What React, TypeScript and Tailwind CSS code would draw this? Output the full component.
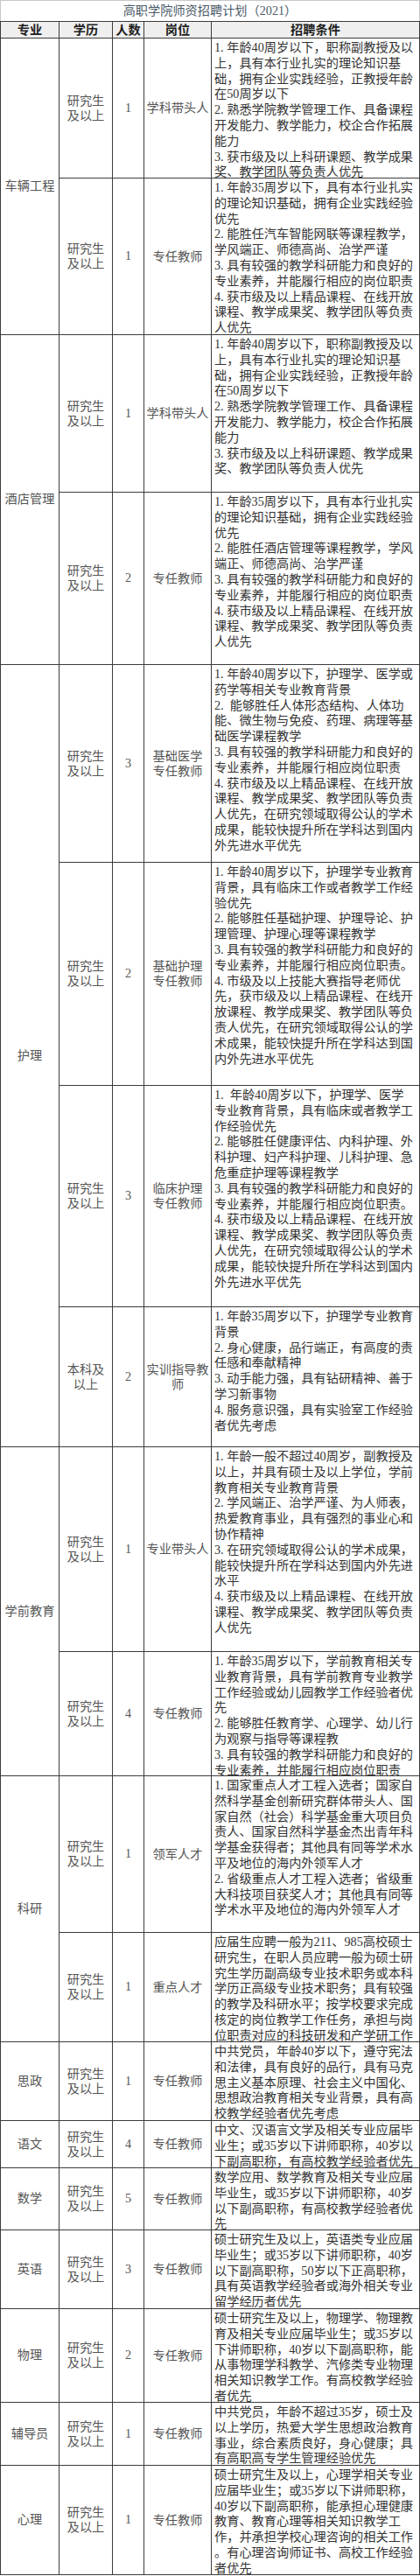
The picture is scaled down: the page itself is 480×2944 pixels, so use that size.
import React from 'react';

type Sub = { h: string; edu: string[]; n: string; pos: string[]; lines: string[] };
type Group = { major: string; rows: Sub[] };

const groups: Group[] = [
  {
    major: '车辆工程',
    rows: [
      {
        h: 'h-[160px]', edu: ['研究生', '及以上'], n: '1', pos: ['学科带头人'],
        lines: [
          '1. 年龄40周岁以下，职称副教授及以',
          '上，具有本行业扎实的理论知识基',
          '础，拥有企业实践经验，正教授年龄',
          '在50周岁以下',
          '2. 熟悉学院教学管理工作、具备课程',
          '开发能力、教学能力，校企合作拓展',
          '能力',
          '3. 获市级及以上科研课题、教学成果',
          '奖、教学团队等负责人优先',
        ],
      },
      {
        h: 'h-[179px]', edu: ['研究生', '及以上'], n: '1', pos: ['专任教师'],
        lines: [
          '1. 年龄35周岁以下，具有本行业扎实',
          '的理论知识基础，拥有企业实践经验',
          '优先',
          '2. 能胜任汽车智能网联等课程教学，',
          '学风端正、师德高尚、治学严谨',
          '3. 具有较强的教学科研能力和良好的',
          '专业素养，并能履行相应的岗位职责',
          '4. 获市级及以上精品课程、在线开放',
          '课程、教学成果奖、教学团队等负责',
          '人优先',
        ],
      },
    ],
  },
  {
    major: '酒店管理',
    rows: [
      {
        h: 'h-[180px]', edu: ['研究生', '及以上'], n: '1', pos: ['学科带头人'],
        lines: [
          '1. 年龄40周岁以下，职称副教授及以',
          '上，具有本行业扎实的理论知识基',
          '础，拥有企业实践经验，正教授年龄',
          '在50周岁以下',
          '2. 熟悉学院教学管理工作、具备课程',
          '开发能力、教学能力，校企合作拓展',
          '能力',
          '3. 获市级及以上科研课题、教学成果',
          '奖、教学团队等负责人优先',
        ],
      },
      {
        h: 'h-[197px]', edu: ['研究生', '及以上'], n: '2', pos: ['专任教师'],
        lines: [
          '1. 年龄35周岁以下，具有本行业扎实',
          '的理论知识基础，拥有企业实践经验',
          '优先',
          '2. 能胜任酒店管理等课程教学，学风',
          '端正、师德高尚、治学严谨',
          '3. 具有较强的教学科研能力和良好的',
          '专业素养，并能履行相应的岗位职责',
          '4. 获市级及以上精品课程、在线开放',
          '课程、教学成果奖、教学团队等负责',
          '人优先',
        ],
      },
    ],
  },
  {
    major: '护理',
    rows: [
      {
        h: 'h-[226px]', edu: ['研究生', '及以上'], n: '3', pos: ['基础医学', '专任教师'],
        lines: [
          '1. 年龄40周岁以下，护理学、医学或',
          '药学等相关专业教育背景',
          '2.  能够胜任人体形态结构、人体功',
          '能、微生物与免疫、药理、病理等基',
          '础医学课程教学',
          '3. 具有较强的教学科研能力和良好的',
          '专业素养，并能履行相应岗位职责',
          '4. 获市级及以上精品课程、在线开放',
          '课程、教学成果奖、教学团队等负责',
          '人优先，在研究领域取得公认的学术',
          '成果，能较快提升所在学科达到国内',
          '外先进水平优先',
        ],
      },
      {
        h: 'h-[255px]', edu: ['研究生', '及以上'], n: '2', pos: ['基础护理', '专任教师'],
        lines: [
          '1. 年龄40周岁以下，护理学专业教育',
          '背景，具有临床工作或者教学工作经',
          '验优先',
          '2. 能够胜任基础护理、护理导论、护',
          '理管理、护理心理等课程教学',
          '3. 具有较强的教学科研能力和良好的',
          '专业素养，并能履行相应岗位职责。',
          '4. 市级及以上技能大赛指导老师优',
          '先，获市级及以上精品课程、在线开',
          '放课程、教学成果奖、教学团队等负',
          '责人优先，在研究领域取得公认的学',
          '术成果，能较快提升所在学科达到国',
          '内外先进水平优先',
        ],
      },
      {
        h: 'h-[253px]', edu: ['研究生', '及以上'], n: '3', pos: ['临床护理', '专任教师'],
        lines: [
          '1.  年龄40周岁以下，护理学、医学',
          '专业教育背景，具有临床或者教学工',
          '作经验优先',
          '2. 能够胜任健康评估、内科护理、外',
          '科护理、妇产科护理、儿科护理、急',
          '危重症护理等课程教学',
          '3. 具有较强的教学科研能力和良好的',
          '专业素养，并能履行相应岗位职责。',
          '4. 获市级及以上精品课程、在线开放',
          '课程、教学成果奖、教学团队等负责',
          '人优先，在研究领域取得公认的学术',
          '成果，能较快提升所在学科达到国内',
          '外先进水平优先',
        ],
      },
      {
        h: 'h-[160px]', edu: ['本科及', '以上'], n: '2', pos: ['实训指导教', '师'],
        lines: [
          '1. 年龄35周岁以下，护理学专业教育',
          '背景',
          '2. 身心健康，品行端正，有高度的责',
          '任感和奉献精神',
          '3. 动手能力强，具有钻研精神、善于',
          '学习新事物',
          '4. 服务意识强，具有实验室工作经验',
          '者优先考虑',
        ],
      },
    ],
  },
  {
    major: '学前教育',
    rows: [
      {
        h: 'h-[234px]', edu: ['研究生', '及以上'], n: '1', pos: ['专业带头人'],
        lines: [
          '1. 年龄一般不超过40周岁，副教授及',
          '以上，并具有硕士及以上学位，学前',
          '教育相关专业教育背景',
          '2. 学风端正、治学严谨、为人师表，',
          '热爱教育事业，具有强烈的事业心和',
          '协作精神',
          '3. 在研究领域取得公认的学术成果，',
          '能较快提升所在学科达到国内外先进',
          '水平',
          '4. 获市级及以上精品课程、在线开放',
          '课程、教学成果奖、教学团队等负责',
          '人优先',
        ],
      },
      {
        h: 'h-[142px]', edu: ['研究生', '及以上'], n: '4', pos: ['专任教师'],
        lines: [
          '1. 年龄35周岁以下，学前教育相关专',
          '业教育背景，具有学前教育专业教学',
          '工作经验或幼儿园教学工作经验者优',
          '先',
          '2. 能够胜任教育学、心理学、幼儿行',
          '为观察与指导等课程教',
          '3. 具有较强的教学科研能力和良好的',
          '专业素养，并能履行相应岗位职责',
        ],
      },
    ],
  },
  {
    major: '科研',
    rows: [
      {
        h: 'h-[179px]', edu: ['研究生', '及以上'], n: '1', pos: ['领军人才'],
        lines: [
          '1. 国家重点人才工程入选者；国家自',
          '然科学基金创新研究群体带头人、国',
          '家自然（社会）科学基金重大项目负',
          '责人、国家自然科学基金杰出青年科',
          '学基金获得者；其他具有同等学术水',
          '平及地位的海内外领军人才',
          '2. 省级重点人才工程入选者；省级重',
          '大科技项目获奖人才；其他具有同等',
          '学术水平及地位的海内外领军人才',
        ],
      },
      {
        h: 'h-[125px]', edu: ['研究生', '及以上'], n: '1', pos: ['重点人才'],
        lines: [
          '应届生应聘一般为211、985高校硕士',
          '研究生，在职人员应聘一般为硕士研',
          '究生学历副高级专业技术职务或本科',
          '学历正高级专业技术职务；具有较强',
          '的教学及科研水平；按学校要求完成',
          '核定的岗位教学工作任务，承担与岗',
          '位职责对应的科技研发和产学研工作',
        ],
      },
    ],
  },
  {
    major: '思政',
    rows: [
      {
        h: 'h-[90px]', edu: ['研究生', '及以上'], n: '1', pos: ['专任教师'],
        lines: [
          '中共党员，年龄40岁以下，遵守宪法',
          '和法律，具有良好的品行，具有马克',
          '思主义基本原理、社会主义中国化、',
          '思想政治教育相关专业背景，具有高',
          '校教学经验者优先考虑',
        ],
      },
    ],
  },
  {
    major: '语文',
    rows: [
      {
        h: 'h-[54px]', edu: ['研究生', '及以上'], n: '4', pos: ['专任教师'],
        lines: [
          '中文、汉语言文学及相关专业应届毕',
          '业生；或35岁以下讲师职称，40岁以',
          '下副高职称，有高校教学经验者优先',
        ],
      },
    ],
  },
  {
    major: '数学',
    rows: [
      {
        h: 'h-[71px]', edu: ['研究生', '及以上'], n: '5', pos: ['专任教师'],
        lines: [
          '数学应用、数学教育及相关专业应届',
          '毕业生，或35岁以下讲师职称，40岁',
          '以下副高职称，有高校教学经验者优',
          '先',
        ],
      },
    ],
  },
  {
    major: '英语',
    rows: [
      {
        h: 'h-[90px]', edu: ['研究生', '及以上'], n: '3', pos: ['专任教师'],
        lines: [
          '硕士研究生及以上，英语类专业应届',
          '毕业生；或35岁以下讲师职称，40岁',
          '以下副高职称，50岁以下正高职称，',
          '具有英语教学经验者或海外相关专业',
          '留学经历者优先',
        ],
      },
    ],
  },
  {
    major: '物理',
    rows: [
      {
        h: 'h-[107px]', edu: ['研究生', '及以上'], n: '2', pos: ['专任教师'],
        lines: [
          '硕士研究生及以上，物理学、物理教',
          '育及相关专业应届毕业生；或35岁以',
          '下讲师职称，40岁以下副高职称，能',
          '从事物理学科教学、汽修类专业物理',
          '相关知识教学工作。有高校教学经验',
          '者优先',
        ],
      },
    ],
  },
  {
    major: '辅导员',
    rows: [
      {
        h: 'h-[72px]', edu: ['研究生', '及以上'], n: '1', pos: ['专任教师'],
        lines: [
          '中共党员，年龄不超过35岁，硕士及',
          '以上学历，热爱大学生思想政治教育',
          '事业，综合素质良好，身心健康；具',
          '有高职高专学生管理经验优先',
        ],
      },
    ],
  },
  {
    major: '心理',
    rows: [
      {
        h: 'h-[125px]', edu: ['研究生', '及以上'], n: '1', pos: ['专任教师'],
        lines: [
          '硕士研究生及以上，心理学相关专业',
          '应届毕业生；或35岁以下讲师职称，',
          '40岁以下副高职称，能承担心理健康',
          '教育、教育心理等相关知识教学工',
          '作，并承担学校心理咨询的相关工作',
          '。有心理咨询师证书、高校工作经验',
          '者优先',
        ],
      },
    ],
  },
];

const FONT = "font-['Liberation_Serif','Noto_Sans_CJK_SC',serif]";

function SubRow({ r }: { r: Sub }) {
  return (
    <div className={`flex border-b border-[#3c3c3c] ${r.h}`}>
      <div className="w-[61px] shrink-0 border-r border-[#3c3c3c] flex flex-col items-center justify-center text-center text-[#555] leading-[17px]">
        {r.edu.map((e, i) => (
          <div key={i}>{e}</div>
        ))}
      </div>
      <div className="w-[36px] shrink-0 border-r border-[#3c3c3c] flex items-center justify-center text-[#555]">
        {r.n}
      </div>
      <div className="w-[77px] shrink-0 border-r border-[#3c3c3c] flex flex-col items-center justify-center text-center text-[#555] leading-[17px]">
        {r.pos.map((p, i) => (
          <div key={i} className="whitespace-nowrap">{p}</div>
        ))}
      </div>
      <div className="flex-1 min-w-0 pl-[3px] pt-[2px] text-[#333] leading-[17.8px] overflow-hidden">
        {r.lines.map((l, i) => (
          <div key={i} className="whitespace-pre">{l}</div>
        ))}
      </div>
    </div>
  );
}

export default function App() {
  return (
    <div className={`w-[480px] bg-white ${FONT} text-[14.2px]`}>
      <div className="h-[24px] flex items-center justify-center border-l border-r border-t border-[#c8c8c8] text-[#4b5a68] text-[14.2px]">
        高职学院师资招聘计划（2021）
      </div>
      <div className="border-t border-l border-r border-[#3c3c3c]">
        <div className="flex h-[19px] border-b border-[#3c3c3c] bg-[#efefef] text-[#1e1e1e] font-bold leading-[18px]">
          <div className="w-[67px] shrink-0 border-r border-[#3c3c3c] flex items-center justify-center">专业</div>
          <div className="w-[61px] shrink-0 border-r border-[#3c3c3c] flex items-center justify-center">学历</div>
          <div className="w-[36px] shrink-0 border-r border-[#3c3c3c] flex items-center justify-center">人数</div>
          <div className="w-[77px] shrink-0 border-r border-[#3c3c3c] flex items-center justify-center">岗位</div>
          <div className="flex-1 flex items-center justify-center">招聘条件</div>
        </div>
        {groups.map((g, gi) => (
          <div key={gi} className="flex">
            <div className="w-[67px] shrink-0 border-r border-b border-[#3c3c3c] flex items-center justify-center text-[#555]">
              {g.major}
            </div>
            <div className="flex-1 min-w-0 flex flex-col">
              {g.rows.map((r, ri) => (
                <SubRow key={ri} r={r} />
              ))}
            </div>
          </div>
        ))}
      </div>
    </div>
  );
}
